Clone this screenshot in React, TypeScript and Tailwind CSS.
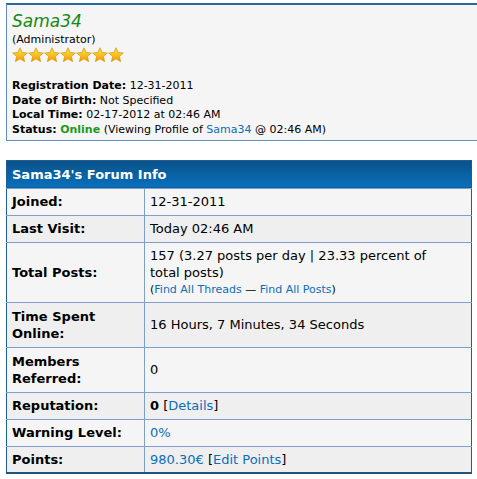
import React from "react"

const font = { fontFamily: '"DejaVu Sans", Verdana, sans-serif' }

function Star() {
  return (
    <svg width="16" height="16" viewBox="0 0 16 16">
      <defs>
        <linearGradient id="sg" x1="0" y1="0" x2="0" y2="1">
          <stop offset="0" stopColor="#ffe066" />
          <stop offset="0.55" stopColor="#fbbf1e" />
          <stop offset="1" stopColor="#e89400" />
        </linearGradient>
      </defs>
      <path
        d="M8 0.8 L10.1 5.6 L15.3 6 L11.3 9.4 L12.6 14.6 L8 11.8 L3.4 14.6 L4.7 9.4 L0.7 6 L5.9 5.6 Z"
        fill="url(#sg)"
        stroke="#d99a10"
        strokeWidth="0.8"
        strokeLinejoin="round"
      />
    </svg>
  )
}

const link = "text-[#0b6db8]"

type Row = { label: React.ReactNode; value: React.ReactNode; h: string }

const rows: Row[] = [
  { label: "Joined:", value: "12-31-2011", h: "h-[27px]" },
  { label: "Last Visit:", value: "Today 02:46 AM", h: "h-[27px]" },
  {
    label: "Total Posts:",
    value: (
      <>
        157 (3.27 posts per day | 23.33 percent of
        <br />
        total posts)
        <div className="text-[11px] leading-[17px]">
          (<span className={link}>Find All Threads</span> — <span className={link}>Find All Posts</span>)
        </div>
      </>
    ),
    h: "h-[60px]",
  },
  {
    label: (
      <>
        Time Spent
        <br />
        Online:
      </>
    ),
    value: "16 Hours, 7 Minutes, 34 Seconds",
    h: "h-[45px]",
  },
  {
    label: (
      <>
        Members
        <br />
        Referred:
      </>
    ),
    value: "0",
    h: "h-[45px]",
  },
  {
    label: "Reputation:",
    value: (
      <>
        <b>0</b> [<span className={link}>Details</span>]
      </>
    ),
    h: "h-[27px]",
  },
  { label: "Warning Level:", value: <span className={link}>0%</span>, h: "h-[27px]" },
  {
    label: "Points:",
    value: (
      <>
        <span className={link}>980.30€</span> [<span className={link}>Edit Points</span>]
      </>
    ),
    h: "h-[27px]",
  },
]

export default function App() {
  return (
    <div className="min-h-[479px] bg-white pt-[3px] text-black" style={font}>
      {/* profile box */}
      <div className="ml-[6px] border-t-2 border-l border-b border-t-[#2a66a0] border-l-[#5f8fc2] border-b-[#5f8fc2] bg-[#f5f5f5] pl-[5px] pt-[5px] pb-[2px] text-[11px] leading-[14.7px]">
        <div className="text-[17px] italic leading-[22px] text-[#138a13]">Sama34</div>
        <div className="leading-[15px]">(Administrator)</div>
        <div className="flex h-[16px]">
          {Array.from({ length: 7 }).map((_, i) => (
            <Star key={i} />
          ))}
        </div>
        <div className="h-[16px]" />
        <div>
          <b>Registration Date:</b> 12-31-2011
        </div>
        <div>
          <b>Date of Birth:</b> Not Specified
        </div>
        <div>
          <b>Local Time:</b> 02-17-2012 at 02:46 AM
        </div>
        <div>
          <b>Status:</b> <b className="text-[#1c9a1c]">Online</b> (Viewing Profile of{" "}
          <span className={link}>Sama34</span> @ 02:46 AM)
        </div>
      </div>

      {/* forum info table */}
      <table className="ml-[6px] mt-[19px] w-[466px] border-collapse border border-[#1d5e96] border-b-2 border-b-[#24527e] text-[13px] leading-[17px]">
        <thead>
          <tr className="h-[28px]">
            <th
              colSpan={2}
              className="bg-gradient-to-b from-[#0a5288] to-[#0870bd] px-[5px] text-left font-bold text-white"
            >
              Sama34's Forum Info
            </th>
          </tr>
        </thead>
        <tbody>
          {rows.map((r, i) => (
            <tr key={i} className={`${r.h} ${i % 2 === 0 ? "bg-[#f5f5f5]" : "bg-[#efefef]"}`}>
              <td className="w-[138px] border-t border-r border-[#7d9fca] px-[5px] align-middle font-bold">
                {r.label}
              </td>
              <td className="border-t border-[#7d9fca] px-[5px] align-middle">{r.value}</td>
            </tr>
          ))}
        </tbody>
      </table>
    </div>
  )
}
